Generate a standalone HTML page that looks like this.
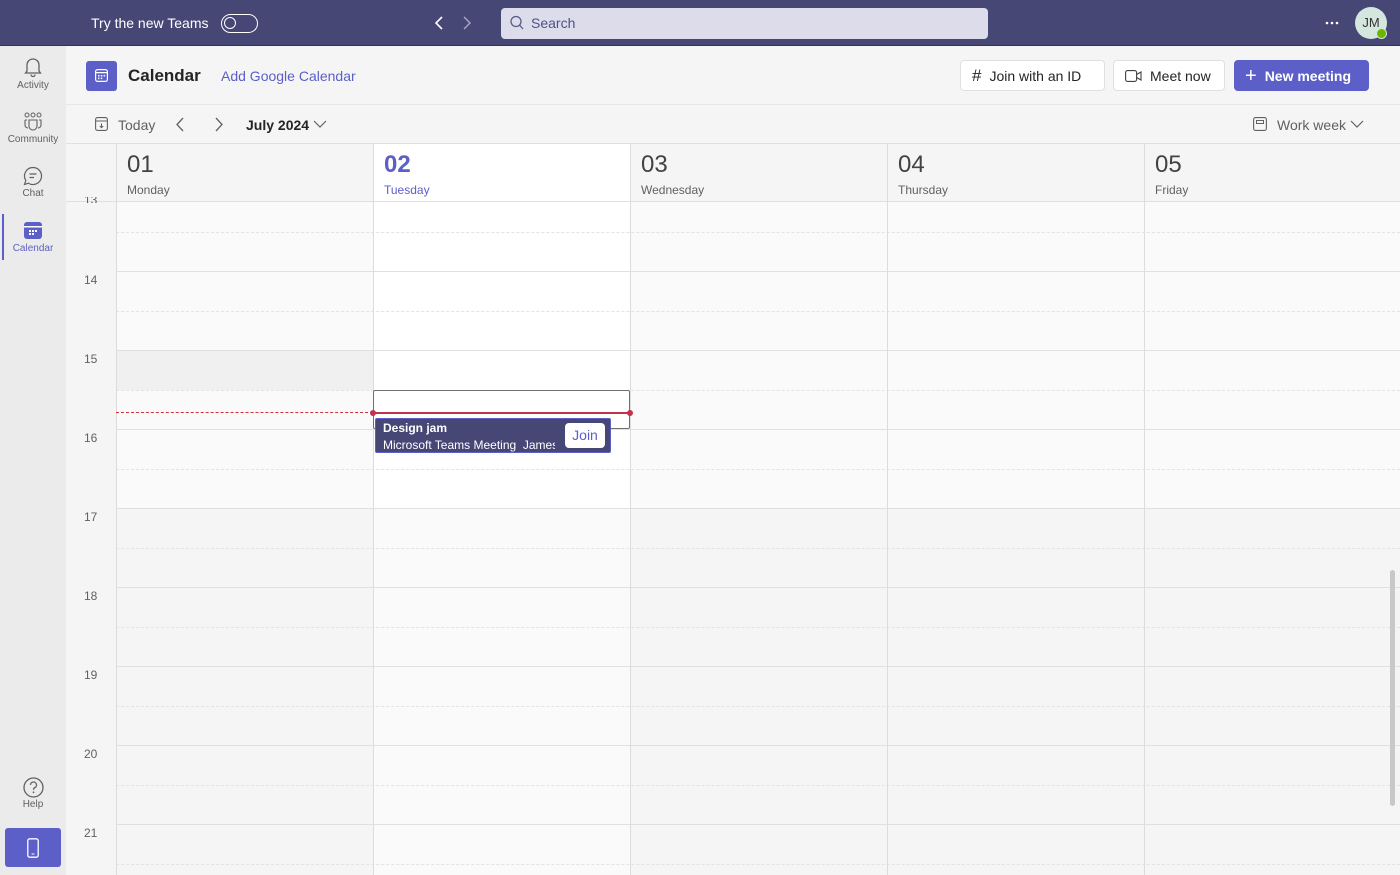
<!DOCTYPE html>
<html><head><meta charset="utf-8"><style>
*{box-sizing:border-box;margin:0;padding:0}
body{width:1400px;height:875px;overflow:hidden;background:#f5f5f5;font-family:"Liberation Sans",sans-serif;position:relative;color:#242424}
.a{position:absolute}
.top{left:0;top:0;width:1400px;height:46px;background:#464775;border-bottom:1px solid #33345e}
.side{left:0;top:46px;width:66px;height:829px;background:#ebebeb}
.si{width:66px;text-align:center;font-size:10px;color:#616161}
.hl{height:1px;background:#e0e0e0;left:116px;width:1284px}
.dl{height:0;border-top:1px dashed #e3e3e3;left:116px;width:1284px}
.vl{width:1px;background:#dcdcdc;top:144px;height:731px}
.tm{left:84px;font-size:12px;color:#616161}
.btn{top:60px;height:31px;border:1px solid #e0e0e0;border-radius:4px;background:#fff;font-size:14px;display:flex;align-items:center}
.dn{font-size:24px;color:#424242;top:151px}
.dw{font-size:12px;color:#616161;top:183px}
</style></head><body>
<div class="a top"></div>
<div class="a" style="left:91px;top:15px;color:#fff;font-size:14px">Try the new Teams</div>
<div class="a" style="left:221px;top:14px;width:37px;height:19px;border:1.5px solid #fff;border-radius:10px"><div style="position:absolute;left:2px;top:2px;width:12px;height:12px;border:1.5px solid #fff;border-radius:50%"></div></div>
<svg class="a" style="left:432px;top:16px" width="44" height="14"><path d="M10 1 L4 7 L10 13" stroke="#fff" stroke-width="1.6" fill="none"/><path d="M32 1 L38 7 L32 13" stroke="#a8a8cc" stroke-width="1.4" fill="none"/></svg>
<div class="a" style="left:501px;top:8px;width:487px;height:31px;background:#dcdcea;border-radius:4px"></div>
<svg class="a" style="left:509px;top:15px" width="16" height="16"><circle cx="7" cy="6.5" r="5" stroke="#5b5b8a" stroke-width="1.3" fill="none"/><path d="M10.5 10 L14 14" stroke="#5b5b8a" stroke-width="1.3"/></svg>
<div class="a" style="left:531px;top:15px;color:#4f5187;font-size:14px">Search</div>
<svg class="a" style="left:1325px;top:21px" width="14" height="4"><circle cx="2" cy="2" r="1.3" fill="#fff"/><circle cx="7" cy="2" r="1.3" fill="#fff"/><circle cx="12" cy="2" r="1.3" fill="#fff"/></svg>
<div class="a" style="left:1355px;top:7px;width:32px;height:32px;border-radius:50%;background:#d5e6de;font-size:13px;text-align:center;line-height:32px;color:#333">JM</div>
<div class="a" style="left:1376px;top:28px;width:11px;height:11px;border-radius:50%;background:#6bb700;border:1.5px solid #d5e6de"></div>

<div class="a side"></div>
<div class="a" style="left:2px;top:214px;width:2px;height:46px;background:#5b5fc7"></div>
<svg class="a" style="left:23px;top:56px" width="20" height="22"><path d="M4 15 V9 a6 6 0 0 1 12 0 V15 L17.5 17 H2.5 Z M8 18.5 a2 2 0 0 0 4 0" stroke="#616161" stroke-width="1.3" fill="none"/></svg>
<div class="a si" style="top:80px">Activity</div>
<svg class="a" style="left:22px;top:112px" width="22" height="20"><circle cx="5" cy="3" r="2" stroke="#616161" fill="none"/><circle cx="11" cy="3" r="2" stroke="#616161" fill="none"/><circle cx="17" cy="3" r="2" stroke="#616161" fill="none"/><path d="M7 8 h8 v6 a4 4 0 0 1 -8 0 Z M3 8 h2 M17 8 h2 v5 a3 3 0 0 1 -3 3 M3 8 v5 a3 3 0 0 0 3 3" stroke="#616161" stroke-width="1.1" fill="none"/></svg>
<div class="a si" style="top:134px">Community</div>
<svg class="a" style="left:23px;top:166px" width="20" height="20"><path d="M10 1.5 a8.5 8.5 0 1 1 -4.5 15.7 L1.5 18.5 L2.8 14.5 A8.5 8.5 0 0 1 10 1.5 Z M6.5 8 h7 M6.5 11.5 h4.5" stroke="#616161" stroke-width="1.2" fill="none"/></svg>
<div class="a si" style="top:188px">Chat</div>
<svg class="a" style="left:24px;top:222px" width="18" height="17"><rect x="0" y="0" width="18" height="17" rx="3" fill="#5b5fc7"/><rect x="0" y="4" width="18" height="1.5" fill="#fff"/><g fill="#fff"><rect x="5" y="8" width="2" height="2"/><rect x="8" y="8" width="2" height="2"/><rect x="11" y="8" width="2" height="2"/><rect x="5" y="11" width="2" height="2"/><rect x="8" y="11" width="2" height="2"/></g></svg>
<div class="a si" style="top:243px;color:#5b5fc7">Calendar</div>
<svg class="a" style="left:23px;top:777px" width="21" height="21"><circle cx="10.5" cy="10.5" r="9.5" stroke="#616161" stroke-width="1.3" fill="none"/><path d="M7.5 8 a3 3 0 1 1 4 2.8 c-0.8 0.4 -1 1 -1 2" stroke="#616161" stroke-width="1.3" fill="none"/><circle cx="10.5" cy="15.3" r="0.9" fill="#616161"/></svg>
<div class="a si" style="top:799px">Help</div>
<div class="a" style="left:5px;top:828px;width:56px;height:39px;background:#5b5fc7;border-radius:3px"></div>
<svg class="a" style="left:27px;top:838px" width="12" height="20"><rect x="0.8" y="0.8" width="10.4" height="18.4" rx="2" stroke="#fff" stroke-width="1.3" fill="none"/><path d="M4.5 16 h3" stroke="#fff"/></svg>

<div class="a" style="left:66px;top:46px;width:1334px;height:98px;background:#f5f5f5"></div>
<div class="a" style="left:66px;top:104px;width:1334px;height:1px;background:#e6e6e6"></div>
<div class="a" style="left:86px;top:61px;width:31px;height:30px;background:#5b5fc7;border-radius:3px"></div>
<svg class="a" style="left:95px;top:69px" width="13" height="13"><rect x="0.6" y="0.6" width="11.8" height="11.8" rx="2" stroke="#fff" stroke-width="1.2" fill="none"/><rect x="0" y="3" width="13" height="1.3" fill="#fff"/><g fill="#fff"><rect x="3" y="6" width="1.5" height="1.5"/><rect x="5.8" y="6" width="1.5" height="1.5"/><rect x="8.6" y="6" width="1.5" height="1.5"/><rect x="3" y="8.6" width="1.5" height="1.5"/><rect x="5.8" y="8.6" width="1.5" height="1.5"/></g></svg>
<div class="a" style="left:128px;top:66px;font-size:17px;font-weight:bold">Calendar</div>
<div class="a" style="left:221px;top:68px;font-size:14px;color:#5b5fc7">Add Google Calendar</div>
<div class="a btn" style="left:960px;width:145px"><span style="margin-left:11px;font-size:17px;margin-right:8px">#</span>Join with an ID</div>
<div class="a btn" style="left:1113px;width:112px"><svg style="margin-left:11px;margin-right:8px" width="17" height="12"><rect x="0.6" y="0.6" width="11" height="10.8" rx="2" stroke="#424242" stroke-width="1.1" fill="none"/><path d="M11.6 4.5 L16 2 V10 L11.6 7.5" stroke="#424242" stroke-width="1.1" fill="none"/></svg>Meet now</div>
<div class="a btn" style="left:1234px;width:135px;background:#5b5fc7;border-color:#5b5fc7;color:#fff;font-weight:bold"><span style="margin-left:10px;font-size:20px;font-weight:normal;margin-right:8px;line-height:1">+</span>New meeting</div>

<svg class="a" style="left:95px;top:117px" width="13" height="14"><rect x="0.6" y="0.6" width="11.8" height="12.8" rx="2" stroke="#616161" stroke-width="1.1" fill="none"/><path d="M0.6 4 h11.8 M6.5 6.5 v4 M4.8 9 L6.5 10.7 L8.2 9" stroke="#616161" stroke-width="1" fill="none"/></svg>
<div class="a" style="left:118px;top:117px;font-size:14px;color:#616161">Today</div>
<svg class="a" style="left:174px;top:117px" width="52" height="15"><path d="M9 1 L3 7.5 L9 14" stroke="#616161" stroke-width="1.3" fill="none"/><path d="M42 1 L48 7.5 L42 14" stroke="#616161" stroke-width="1.3" fill="none"/></svg>
<div class="a" style="left:246px;top:117px;font-size:14px;font-weight:bold">July 2024</div>
<svg class="a" style="left:313px;top:120px" width="14" height="8"><path d="M1 1 L7 7 L13 1" stroke="#616161" stroke-width="1.2" fill="none"/></svg>
<svg class="a" style="left:1253px;top:117px" width="14" height="14"><rect x="0.6" y="0.6" width="12.8" height="12.8" rx="2" stroke="#616161" stroke-width="1.1" fill="none"/><rect x="3.5" y="3.5" width="7" height="3" stroke="#616161" fill="none"/></svg>
<div class="a" style="left:1277px;top:117px;font-size:14px;color:#616161">Work week</div>
<svg class="a" style="left:1350px;top:120px" width="14" height="8"><path d="M1 1 L7 7 L13 1" stroke="#616161" stroke-width="1.2" fill="none"/></svg>

<div class="a" style="left:66px;top:144px;width:1334px;height:731px;background:#f5f5f5"></div>
<div class="a" style="left:116px;top:202px;width:1284px;height:306px;background:#fafafa"></div>
<div class="a" style="left:116px;top:350px;width:257px;height:40px;background:#f0f0f0"></div>
<div class="a" style="left:373px;top:144px;width:257px;height:364px;background:#fff"></div>
<div class="a" style="left:373px;top:508px;width:257px;height:367px;background:#fafafa"></div>
<div class="a" style="left:116px;top:144px;width:1284px;height:58px;background:#f5f5f5"></div>
<div class="a" style="left:373px;top:144px;width:257px;height:58px;background:#fff"></div>
<div class="a" style="left:66px;top:143px;width:1334px;height:1px;background:#e0e0e0"></div>
<div class="a" style="left:66px;top:201px;width:1334px;height:1px;background:#e0e0e0"></div>

<div class="a hl" style="top:271px"></div><div class="a hl" style="top:350px"></div><div class="a hl" style="top:429px"></div><div class="a hl" style="top:508px"></div><div class="a hl" style="top:587px"></div><div class="a hl" style="top:666px"></div><div class="a hl" style="top:745px"></div><div class="a hl" style="top:824px"></div>
<div class="a dl" style="top:232px"></div><div class="a dl" style="top:311px"></div><div class="a dl" style="top:390px"></div><div class="a dl" style="top:469px"></div><div class="a dl" style="top:548px"></div><div class="a dl" style="top:627px"></div><div class="a dl" style="top:706px"></div><div class="a dl" style="top:785px"></div><div class="a dl" style="top:864px"></div>
<div class="a vl" style="left:116px"></div><div class="a vl" style="left:373px"></div><div class="a vl" style="left:630px"></div><div class="a vl" style="left:887px"></div><div class="a vl" style="left:1144px"></div>

<div class="a tm" style="top:197px;height:6px;overflow:hidden;line-height:6px">13</div>
<div class="a tm" style="top:273px">14</div><div class="a tm" style="top:352px">15</div><div class="a tm" style="top:431px">16</div><div class="a tm" style="top:510px">17</div><div class="a tm" style="top:589px">18</div><div class="a tm" style="top:668px">19</div><div class="a tm" style="top:747px">20</div><div class="a tm" style="top:826px">21</div>

<div class="a dn" style="left:127px">01</div><div class="a dw" style="left:127px">Monday</div>
<div class="a dn" style="left:384px;color:#5b5fc7;font-weight:bold">02</div><div class="a dw" style="left:384px;color:#5b5fc7">Tuesday</div>
<div class="a dn" style="left:641px">03</div><div class="a dw" style="left:641px">Wednesday</div>
<div class="a dn" style="left:898px">04</div><div class="a dw" style="left:898px">Thursday</div>
<div class="a dn" style="left:1155px">05</div><div class="a dw" style="left:1155px">Friday</div>

<div class="a" style="left:373px;top:390px;width:257px;height:39px;border:1px solid #707070;background:#fff;border-radius:2px"></div>
<div class="a" style="left:116px;top:412px;width:257px;border-top:1px dashed #d13438"></div>
<div class="a" style="left:373px;top:412px;width:257px;height:2px;background:#c4314b"></div>
<div class="a" style="left:370px;top:410px;width:6px;height:6px;border-radius:50%;background:#c4314b"></div>
<div class="a" style="left:627px;top:410px;width:6px;height:6px;border-radius:50%;background:#c4314b"></div>
<div class="a" style="left:375px;top:418px;width:236px;height:35px;background:#464775;border:1px solid #5b5fc7;border-radius:2px;color:#fff;font-size:12px;overflow:hidden">
<div style="position:absolute;left:7px;top:2px;font-weight:bold">Design jam</div>
<div style="position:absolute;left:7px;top:19px;width:172px;white-space:nowrap;overflow:hidden">Microsoft Teams Meeting&nbsp; James</div>
<div style="position:absolute;left:189px;top:4px;width:40px;height:25px;background:#fff;border-radius:4px;color:#5b5fc7;font-size:14px;text-align:center;line-height:25px">Join</div>
</div>
<div class="a" style="left:1390px;top:570px;width:5px;height:236px;background:#c8c8c8;border-radius:3px"></div>
</body></html>
